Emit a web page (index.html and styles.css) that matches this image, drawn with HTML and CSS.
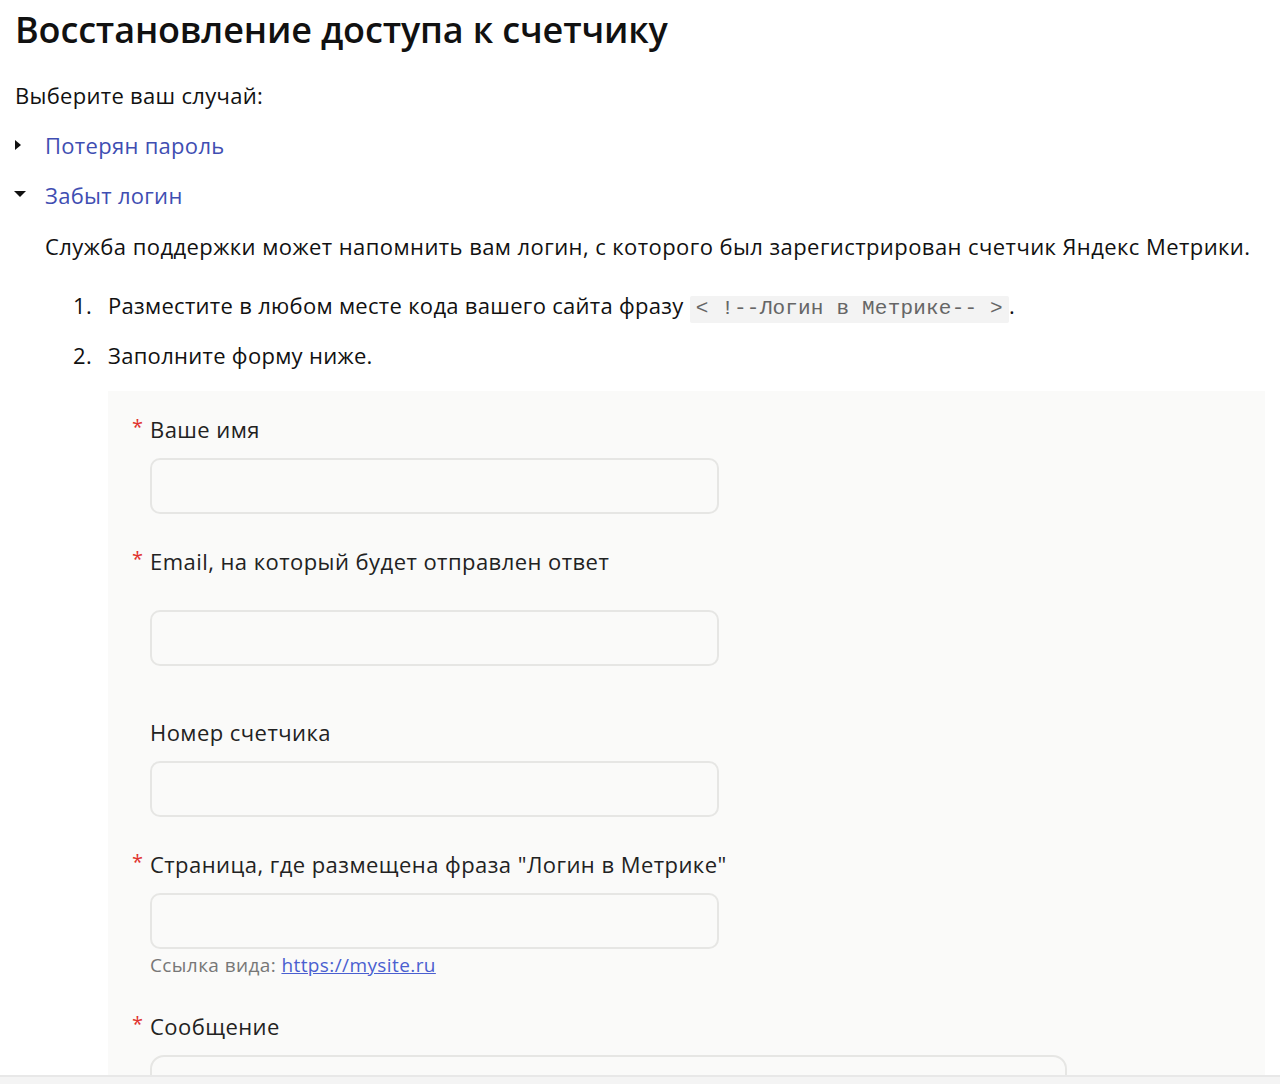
FILE: index.html
```html
<!DOCTYPE html>
<html lang="ru">
<head>
<meta charset="utf-8">
<title>Восстановление доступа к счетчику</title>
<link rel="stylesheet" href="styles.css">
</head>
<body>
<main class="page">
  <h1 class="title">Восстановление доступа к счетчику</h1>
  <p class="lead">Выберите ваш случай:</p>
  <div class="case">
    <span class="tri tri-right"></span>
    <a class="case-link" href="#">Потерян пароль</a>
  </div>
  <div class="case">
    <span class="tri tri-down"></span>
    <a class="case-link" href="#">Забыт логин</a>
  </div>
  <div class="case-body">
    <p class="para">Служба поддержки может напомнить вам логин, с которого был зарегистрирован счетчик Яндекс Метрики.</p>
    <ol class="steps">
      <li><span class="num">1.</span><span>Разместите в любом месте кода вашего сайта фразу <code class="code">&lt; !--Логин в Метрике-- &gt;</code>.</span></li>
      <li><span class="num">2.</span><span>Заполните форму ниже.</span></li>
    </ol>
    <form class="form">
      <div class="field">
        <div class="label"><span class="req">*</span>Ваше имя</div>
        <div class="input"></div>
      </div>
      <div class="field field-email">
        <div class="label label-gap"><span class="req">*</span>Email, на который будет отправлен ответ</div>
        <div class="input"></div>
      </div>
      <div class="field">
        <div class="label">Номер счетчика</div>
        <div class="input"></div>
      </div>
      <div class="field field-page">
        <div class="label"><span class="req">*</span>Страница, где размещена фраза "Логин в Метрике"</div>
        <div class="input"></div>
        <div class="hint">Ссылка вида: <a href="#" class="hint-link">https://mysite.ru</a></div>
      </div>
      <div class="field">
        <div class="label"><span class="req">*</span>Сообщение</div>
        <div class="textarea"></div>
      </div>
    </form>
  </div>
</main>
<div class="bottom-bar"></div>
</body>
</html>
```
FILE: styles.css
```css
* { box-sizing: border-box; }
html, body { margin: 0; padding: 0; background: #fff; }
body {
  font-family: "Open Sans", "Noto Sans", sans-serif;
  color: #111;
  overflow: hidden;
  height: 1084px;
}
.page { padding: 0 15px; }
.title {
  margin: 0;
  padding-top: 8px;
  font-size: 36px;
  line-height: 44px;
  font-weight: 600;
  color: #111;
  letter-spacing: -0.15px;
}
.lead {
  margin: 28px 0 0 0;
  font-size: 22px;
  line-height: 30px;
  font-weight: 500;
  letter-spacing: 0.3px;
}
.case {
  display: flex;
  align-items: center;
  height: 30px;
  margin-top: 20px;
}
.tri { width: 30px; display: inline-block; position: relative; height: 12px; }
.tri-right::before {
  content: "";
  position: absolute;
  left: 0; top: 1px;
  border-top: 5px solid transparent;
  border-bottom: 5px solid transparent;
  border-left: 6px solid #111;
}
.tri-down::before {
  content: "";
  position: absolute;
  left: -1px; top: 2px;
  border-left: 6px solid transparent;
  border-right: 6px solid transparent;
  border-top: 6px solid #111;
}
.case-link {
  color: #3f4eb2;
  text-decoration: none;
  font-size: 22px;
  line-height: 30px;
  font-weight: 500;
  letter-spacing: 0.3px;
}
.case-body { padding-left: 30px; }
.para {
  margin: 21px 0 0 0;
  font-size: 22px;
  line-height: 30px;
  font-weight: 500;
  letter-spacing: 0.43px;
}
.steps {
  list-style: none;
  margin: 29px 0 0 0;
  padding: 0 0 0 28px;
  font-size: 22px;
  line-height: 30px;
  font-weight: 500;
  letter-spacing: 0.3px;
}
.steps li { display: flex; margin-bottom: 20px; height: 30px; align-items: center; }
.steps li:last-child { margin-bottom: 0; }
.num { width: 35px; flex: none; }
.code {
  font-family: "Liberation Mono", "Courier New", monospace;
  font-size: 21px;
  line-height: 24px;
  font-weight: 400;
  letter-spacing: 0.2px;
  color: #666;
  background: #f3f3f3;
  padding: 1px 6px 3px 6px;
  border-radius: 2px;
}
.form {
  margin: 21px 0 0 63px;
  background: #fafaf9;
  padding: 23px 0 0 24px;
  width: 1157px;
  min-height: 700px;
}
.field { margin-bottom: 32px; }
.field-email { margin-bottom: 51px; }
.label {
  font-size: 22px;
  line-height: 30px;
  font-weight: 500;
  letter-spacing: 0.45px;
  color: #222;
  padding-left: 18px;
  position: relative;
}
.req {
  color: #e0322e;
  font-size: 20px;
  font-weight: 400;
  position: absolute;
  left: 0;
  top: -2px;
}
.label-gap + .input { margin-top: 34px; }
.input {
  margin-top: 14px;
  margin-left: 18px;
  width: 569px;
  height: 56px;
  border: 2px solid #e6e6e4;
  border-radius: 10px;
  background: #fafaf9;
}
.hint {
  margin-top: 6px;
  margin-left: 18px;
  font-size: 19px;
  line-height: 20px;
  color: #777;
  letter-spacing: 0.4px;
}
.hint-link { color: #4a5fd0; text-decoration: underline; }
.field-page { margin-bottom: 36px; }
.textarea {
  margin-top: 14px;
  margin-left: 18px;
  width: 917px;
  height: 120px;
  border: 2px solid #e6e6e4;
  border-radius: 14px;
}
.bottom-bar {
  position: fixed;
  left: 0; right: 0; bottom: 0;
  height: 9px;
  background: #f4f4f4;
  border-top: 2px solid #e8e8e8;
}
```
